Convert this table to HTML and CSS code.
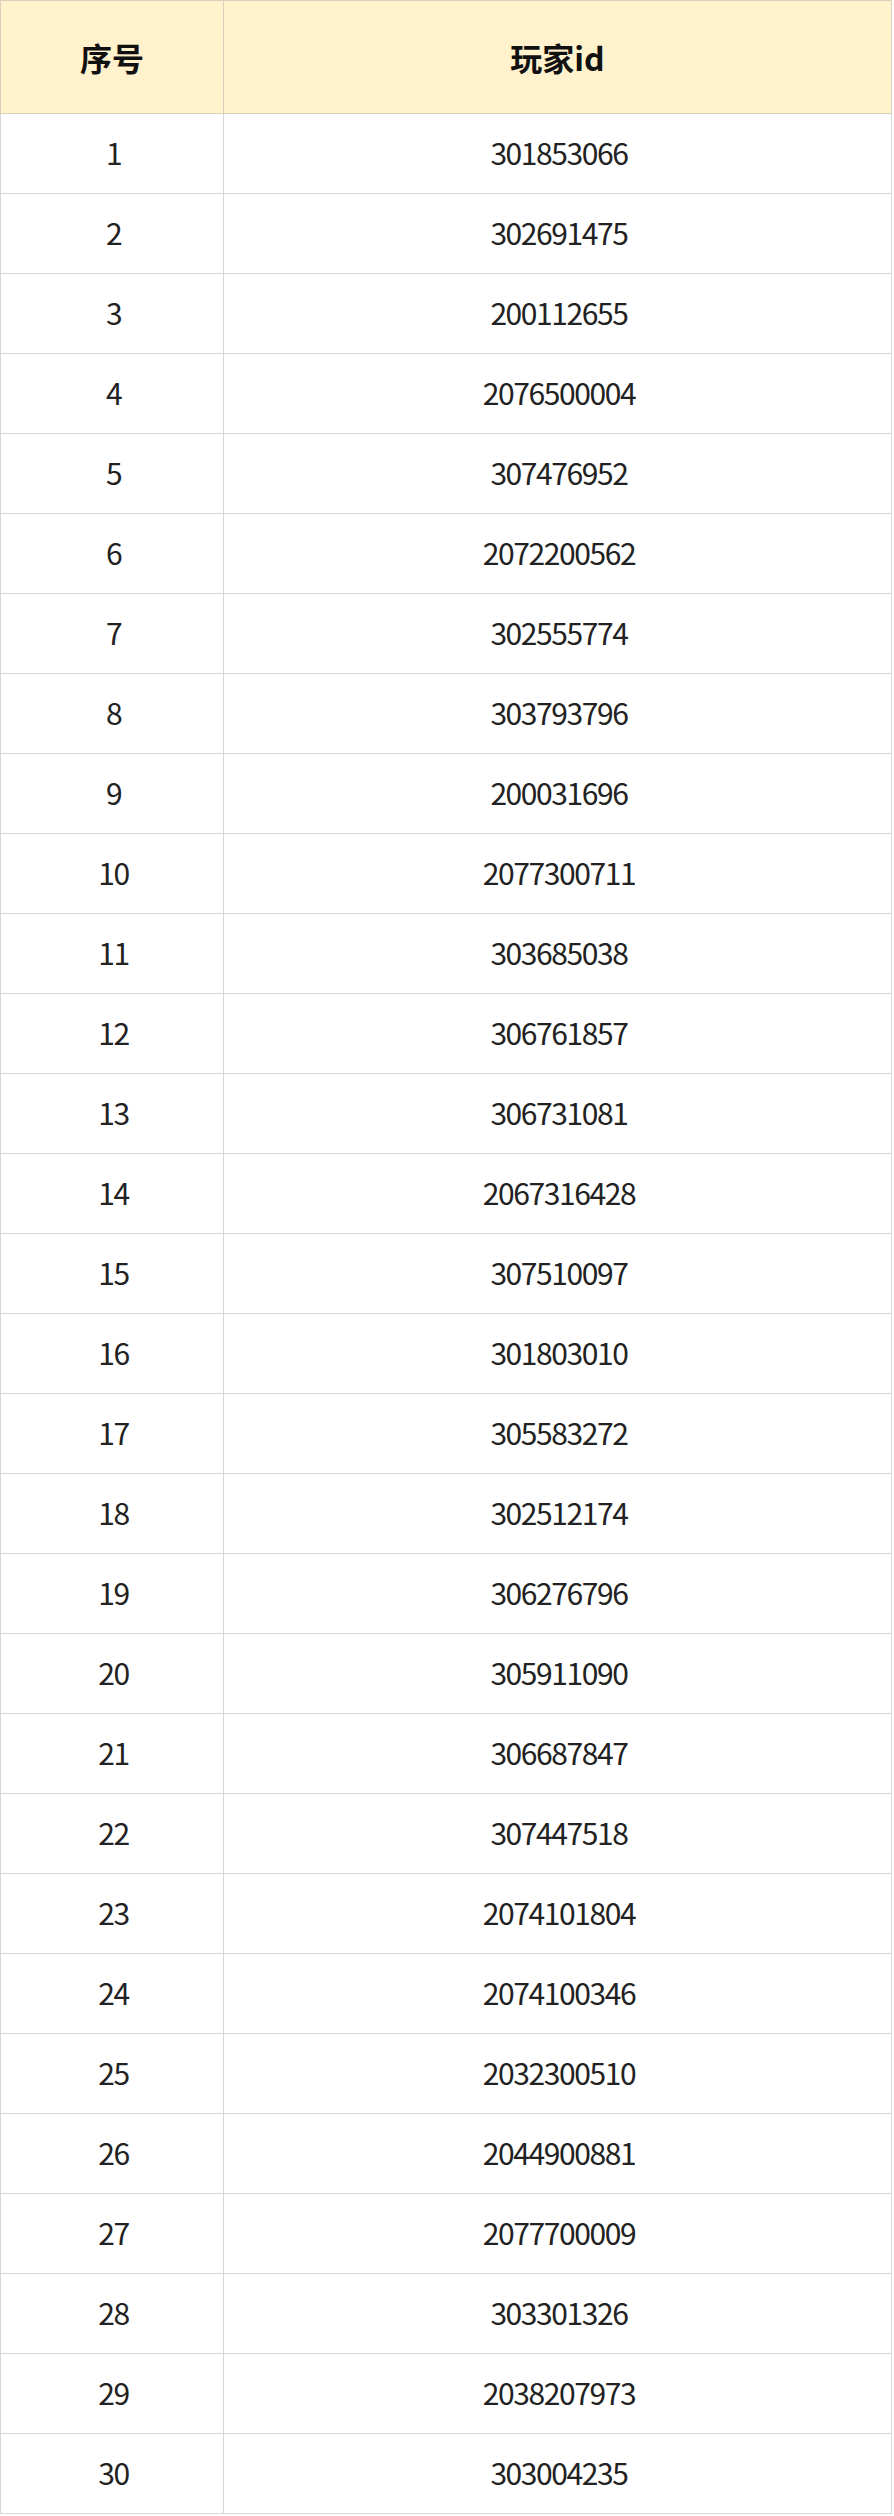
FILE: index.html
```html
<!DOCTYPE html>
<html lang="zh">
<head>
<meta charset="utf-8">
<link rel="stylesheet" href="styles.css">
</head>
<body>
<table class="grid">
  <thead>
    <tr><th class="c1">序号</th><th class="c2">玩家id</th></tr>
  </thead>
  <tbody>
    <tr><td>1</td><td>301853066</td></tr>
    <tr><td>2</td><td>302691475</td></tr>
    <tr><td>3</td><td>200112655</td></tr>
    <tr><td>4</td><td>2076500004</td></tr>
    <tr><td>5</td><td>307476952</td></tr>
    <tr><td>6</td><td>2072200562</td></tr>
    <tr><td>7</td><td>302555774</td></tr>
    <tr><td>8</td><td>303793796</td></tr>
    <tr><td>9</td><td>200031696</td></tr>
    <tr><td>10</td><td>2077300711</td></tr>
    <tr><td>11</td><td>303685038</td></tr>
    <tr><td>12</td><td>306761857</td></tr>
    <tr><td>13</td><td>306731081</td></tr>
    <tr><td>14</td><td>2067316428</td></tr>
    <tr><td>15</td><td>307510097</td></tr>
    <tr><td>16</td><td>301803010</td></tr>
    <tr><td>17</td><td>305583272</td></tr>
    <tr><td>18</td><td>302512174</td></tr>
    <tr><td>19</td><td>306276796</td></tr>
    <tr><td>20</td><td>305911090</td></tr>
    <tr><td>21</td><td>306687847</td></tr>
    <tr><td>22</td><td>307447518</td></tr>
    <tr><td>23</td><td>2074101804</td></tr>
    <tr><td>24</td><td>2074100346</td></tr>
    <tr><td>25</td><td>2032300510</td></tr>
    <tr><td>26</td><td>2044900881</td></tr>
    <tr><td>27</td><td>2077700009</td></tr>
    <tr><td>28</td><td>303301326</td></tr>
    <tr><td>29</td><td>2038207973</td></tr>
    <tr><td>30</td><td>303004235</td></tr>
  </tbody>
</table>
</body>
</html>
```

FILE: styles.css
```css
html, body {
  margin: 0;
  padding: 0;
  background: #ffffff;
}
.grid {
  width: 892px;
  border-collapse: collapse;
  table-layout: fixed;
  font-family: "Noto Sans CJK SC", "Noto Sans", sans-serif;
  color: #222222;
}
.grid th, .grid td {
  border: 1px solid #d6d6dc;
  text-align: center;
  vertical-align: middle;
  padding: 0;
}
.grid th {
  background: #fff2cc;
  height: 112px;
  font-size: 32px;
  font-weight: 700;
  color: #111111;
  border-color: #d8d2bc;
}
.grid td {
  height: 76px;
  font-size: 30px;
  font-weight: 400;
  letter-spacing: -1.4px;
  padding: 0 0 3px 3px;
}
.grid .c1 {
  width: 222px;
}
```
